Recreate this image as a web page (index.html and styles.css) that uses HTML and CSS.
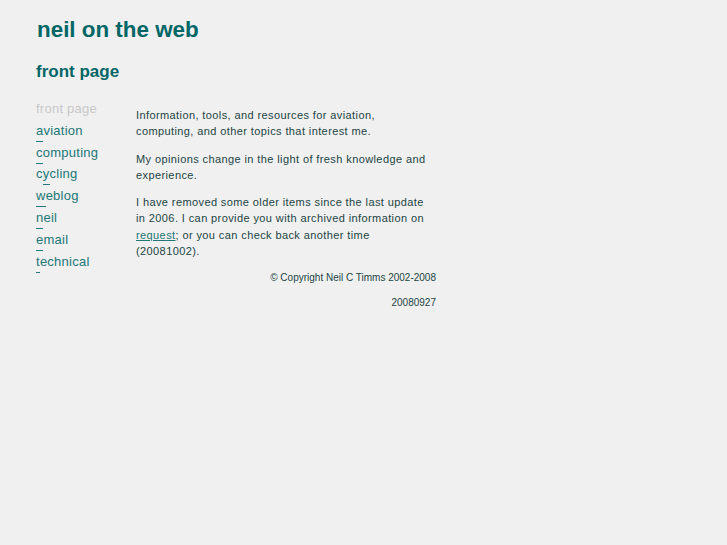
FILE: index.html
```html
<!DOCTYPE html>
<html>
<head>
<meta charset="utf-8">
<title>neil on the web</title>
<link rel="stylesheet" href="styles.css">
</head>
<body>
<div class="page">
  <h1 class="site-title">neil on the web</h1>
  <h2 class="page-title">front page</h2>
  <div class="layout">
    <ul class="nav">
      <li class="current">front page</li>
      <li><a href="#"><span class="key">a</span>viation</a></li>
      <li><a href="#"><span class="key">c</span>omputing</a></li>
      <li><a href="#">c<span class="key">y</span>cling</a></li>
      <li><a href="#"><span class="key">w</span>eblog</a></li>
      <li><a href="#"><span class="key">n</span>eil</a></li>
      <li><a href="#"><span class="key">e</span>mail</a></li>
      <li><a href="#"><span class="key">t</span>echnical</a></li>
    </ul>
    <div class="content">
      <p>Information, tools, and resources for aviation, computing, and other topics that interest me.</p>
      <p>My opinions change in the light of fresh knowledge and experience.</p>
      <p>I have removed some older items since the last update in 2006. I can provide you with archived information on <a href="#">request</a>; or you can check back another time (20081002).</p>
      <p class="copyright">© Copyright Neil C Timms 2002-2008</p>
      <p class="date">20080927</p>
    </div>
  </div>
</div>
</body>
</html>
```

FILE: styles.css
```css
html, body {
  margin: 0;
  padding: 0;
  background: #f0f0f0;
}
body {
  font-family: "Liberation Sans", Arial, sans-serif;
  color: #224444;
}
.page {
  padding: 16px 36px;
}
.site-title {
  margin: 0;
  padding-left: 1px;
  font-size: 22.4px;
  line-height: 28px;
  color: #006666;
  font-weight: bold;
}
.page-title {
  margin: 17px 0 0;
  font-size: 17px;
  line-height: 22px;
  color: #006666;
  font-weight: bold;
}
.layout {
  display: flex;
  margin-top: 15px;
}
.nav {
  list-style: none;
  margin: 0;
  padding: 0;
  width: 100px;
  font-size: 13px;
  letter-spacing: 0.25px;
  line-height: 21.8px;
}
.nav li {
  margin: 0;
}
.nav .current {
  color: #c8c8c8;
}
.nav a {
  color: #227777;
  text-decoration: none;
}
.nav .key {
  display: inline-block;
  line-height: 15px;
  border-bottom: 1px solid #227777;
  margin-bottom: -6px;
  padding-bottom: 3px;
}
.content {
  width: 300px;
  font-size: 11px;
  letter-spacing: 0.4px;
  line-height: 16.3px;
  padding-top: 9px;
}
.content p {
  margin: 0 0 11px;
}
.content a {
  color: #227777;
}
.content .copyright, .content .date {
  text-align: right;
  font-size: 10px;
  letter-spacing: 0;
}
.content .copyright {
  margin: 0 0 8px;
}
```
